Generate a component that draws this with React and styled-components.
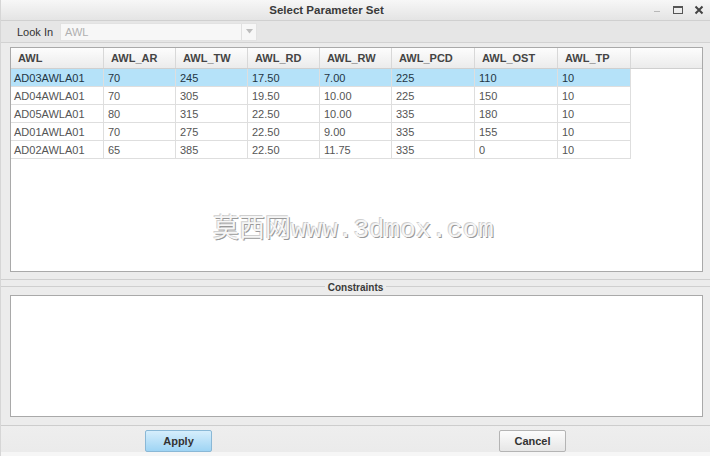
import React from 'react';
import styled, { createGlobalStyle } from 'styled-components';

const Global = createGlobalStyle`
  html, body { margin: 0; padding: 0; background: #ececec; }
  body { font-family: "Liberation Sans", Arial, sans-serif; font-size: 11px; color: #333; }
`;

const Window = styled.div`
  width: 710px;
  height: 456px;
  display: flex;
  flex-direction: column;
  background: #ececec;
  overflow: hidden;
  position: relative;
  box-sizing: border-box;
  border-left: 1px solid #d6d6d6;
`;

const TitleBar = styled.div`
  height: 21px;
  flex: none;
  display: flex;
  align-items: center;
  justify-content: center;
  position: relative;
  background: linear-gradient(#f7f7f7, #e4e4e4);
  border-bottom: 1px solid #d0d0d0;
  box-sizing: border-box;
  padding-right: 58px;
  font-weight: bold;
  font-size: 11.5px;
  color: #3a3a3a;
`;

const Controls = styled.div`
  position: absolute;
  right: 5px;
  top: 4px;
  display: flex;
  gap: 9px;
  align-items: center;
`;

const Toolbar = styled.div`
  height: 22px;
  flex: none;
  display: flex;
  align-items: center;
  background: #e6e6e6;
  border-bottom: 1px solid #d2d2d2;
  box-sizing: border-box;
  padding-left: 8px;
`;

const LookLabel = styled.span`
  width: 51px;
  padding-left: 8px;
  box-sizing: border-box;
  color: #333;
`;

const Combo = styled.div`
  width: 197px;
  height: 18px;
  box-sizing: border-box;
  background: #f7f7f7;
  border: 1px solid #e2e2e2;
  display: flex;
  align-items: center;
  color: #b0b0b0;
  padding-left: 4px;
`;

const ComboText = styled.span`
  flex: 1;
`;

const ComboArrow = styled.div`
  width: 14px;
  height: 16px;
  border-left: 1px solid #e0e0e0;
  display: flex;
  align-items: center;
  justify-content: center;
`;

const Panel = styled.div`
  margin: ${p => p.$top}px 7px 0 9px;
  height: ${p => p.$height}px;
  flex: none;
  background: #fff;
  border: 1px solid #a9a9a9;
  box-sizing: border-box;
  position: relative;
`;

const HeaderRow = styled.div`
  display: flex;
  height: 20px;
  background: linear-gradient(#fdfdfd, #ebebeb);
  border-bottom: 1px solid #cfcfcf;
`;

const HeadCell = styled.div`
  width: ${p => p.$w}px;
  flex: none;
  box-sizing: border-box;
  padding-left: 7px;
  border-right: 1px solid #d8d8d8;
  display: flex;
  align-items: center;
  font-weight: bold;
  color: #444;
`;

const Row = styled.div`
  display: flex;
  width: 620px;
  height: 18px;
  background: ${p => (p.$selected ? '#b5e2f9' : '#fff')};
  color: ${p => (p.$selected ? '#1f3544' : '#555')};
`;

const Cell = styled.div`
  width: ${p => p.$w}px;
  flex: none;
  box-sizing: border-box;
  padding-left: ${p => (p.$first ? 3 : 4)}px;
  border-right: 1px solid #dedede;
  border-bottom: 1px solid #dedede;
  display: flex;
  align-items: center;
`;

const Watermark = styled.div`
  position: absolute;
  left: 202px;
  top: 159px;
  font-family: "Liberation Mono", "Noto Sans CJK SC", monospace;
  font-size: 26px;
  color: #f6f6f6;
  text-shadow: 1px 1px 0 #999, -1px -1px 0 #cfcfcf;
  white-space: nowrap;
`;

const Splitter = styled.div`
  height: 23px;
  flex: none;
  position: relative;
  display: flex;
  flex-direction: column;
`;

const SplitLine = styled.div`
  height: 1px;
  background: #cfcfcf;
  margin-top: ${p => p.$top}px;
`;

const Legend = styled.div`
  position: absolute;
  left: 0;
  right: 0;
  top: 10px;
  display: flex;
  justify-content: center;
`;

const LegendText = styled.span`
  background: #ececec;
  padding: 0 3px;
  font-size: 10px;
  font-weight: bold;
  color: #3a3a3a;
`;

const Footer = styled.div`
  margin-top: 8px;
  flex: 1;
  border-top: 1px solid #cdcdcd;
  background: linear-gradient(#eeeeee, #ebebeb 85%, #f6f6f6 86%);
  display: flex;
  align-items: flex-start;
  padding-top: 4px;
  box-sizing: border-box;
`;

const Button = styled.button`
  width: 67px;
  height: 22px;
  margin-left: ${p => p.$ml}px;
  font-family: "Liberation Sans", Arial, sans-serif;
  font-size: 11px;
  font-weight: bold;
  color: #333;
  border-radius: 2px;
  border: 1px solid ${p => (p.$primary ? '#8ab8d6' : '#b4b4b4')};
  background: ${p =>
    p.$primary
      ? 'linear-gradient(#d6eefc, #9ed4f4)'
      : 'linear-gradient(#fcfcfc, #e6e6e6)'};
  padding: 0;
`;

const cols = [
  ['AWL', 93],
  ['AWL_AR', 72],
  ['AWL_TW', 72],
  ['AWL_RD', 72],
  ['AWL_RW', 72],
  ['AWL_PCD', 83],
  ['AWL_OST', 83],
  ['AWL_TP', 73],
];

const rows = [
  ['AD03AWLA01', '70', '245', '17.50', '7.00', '225', '110', '10'],
  ['AD04AWLA01', '70', '305', '19.50', '10.00', '225', '150', '10'],
  ['AD05AWLA01', '80', '315', '22.50', '10.00', '335', '180', '10'],
  ['AD01AWLA01', '70', '275', '22.50', '9.00', '335', '155', '10'],
  ['AD02AWLA01', '65', '385', '22.50', '11.75', '335', '0', '10'],
];

export default function App() {
  return (
    <>
      <Global />
      <Window>
        <TitleBar>
          Select Parameter Set
          <Controls>
            <svg width="12" height="12" viewBox="0 0 12 12">
              <rect x="3" y="7" width="6" height="1" fill="#b8b8b8" />
            </svg>
            <svg width="12" height="12" viewBox="0 0 12 12">
              <rect x="1.5" y="2.5" width="9" height="7" fill="none" stroke="#555" />
              <rect x="1" y="2" width="10" height="2" fill="#555" />
            </svg>
            <svg width="12" height="12" viewBox="0 0 12 12">
              <path d="M2.5 2.5 L9.5 9.5 M9.5 2.5 L2.5 9.5" stroke="#444" strokeWidth="2" />
            </svg>
          </Controls>
        </TitleBar>
        <Toolbar>
          <LookLabel>Look In</LookLabel>
          <Combo>
            <ComboText>AWL</ComboText>
            <ComboArrow>
              <svg width="7" height="5" viewBox="0 0 7 5">
                <path d="M0 0 L7 0 L3.5 4.5 Z" fill="#bdbdbd" />
              </svg>
            </ComboArrow>
          </Combo>
        </Toolbar>
        <Panel $top={4} $height={225}>
          <HeaderRow>
            {cols.map(([name, w]) => (
              <HeadCell key={name} $w={w}>{name}</HeadCell>
            ))}
          </HeaderRow>
          {rows.map((r, i) => (
            <Row key={r[0]} $selected={i === 0}>
              {r.map((v, j) => (
                <Cell key={j} $w={cols[j][1]} $first={j === 0}>{v}</Cell>
              ))}
            </Row>
          ))}
          <Watermark>莫西网www.3dmox.com</Watermark>
        </Panel>
        <Splitter>
          <SplitLine $top={7} />
          <SplitLine $top={6} />
          <Legend><LegendText>Constraints</LegendText></Legend>
        </Splitter>
        <Panel $top={0} $height={122} />
        <Footer>
          <Button $primary $ml={144}>Apply</Button>
          <Button $ml={287}>Cancel</Button>
        </Footer>
      </Window>
    </>
  );
}
